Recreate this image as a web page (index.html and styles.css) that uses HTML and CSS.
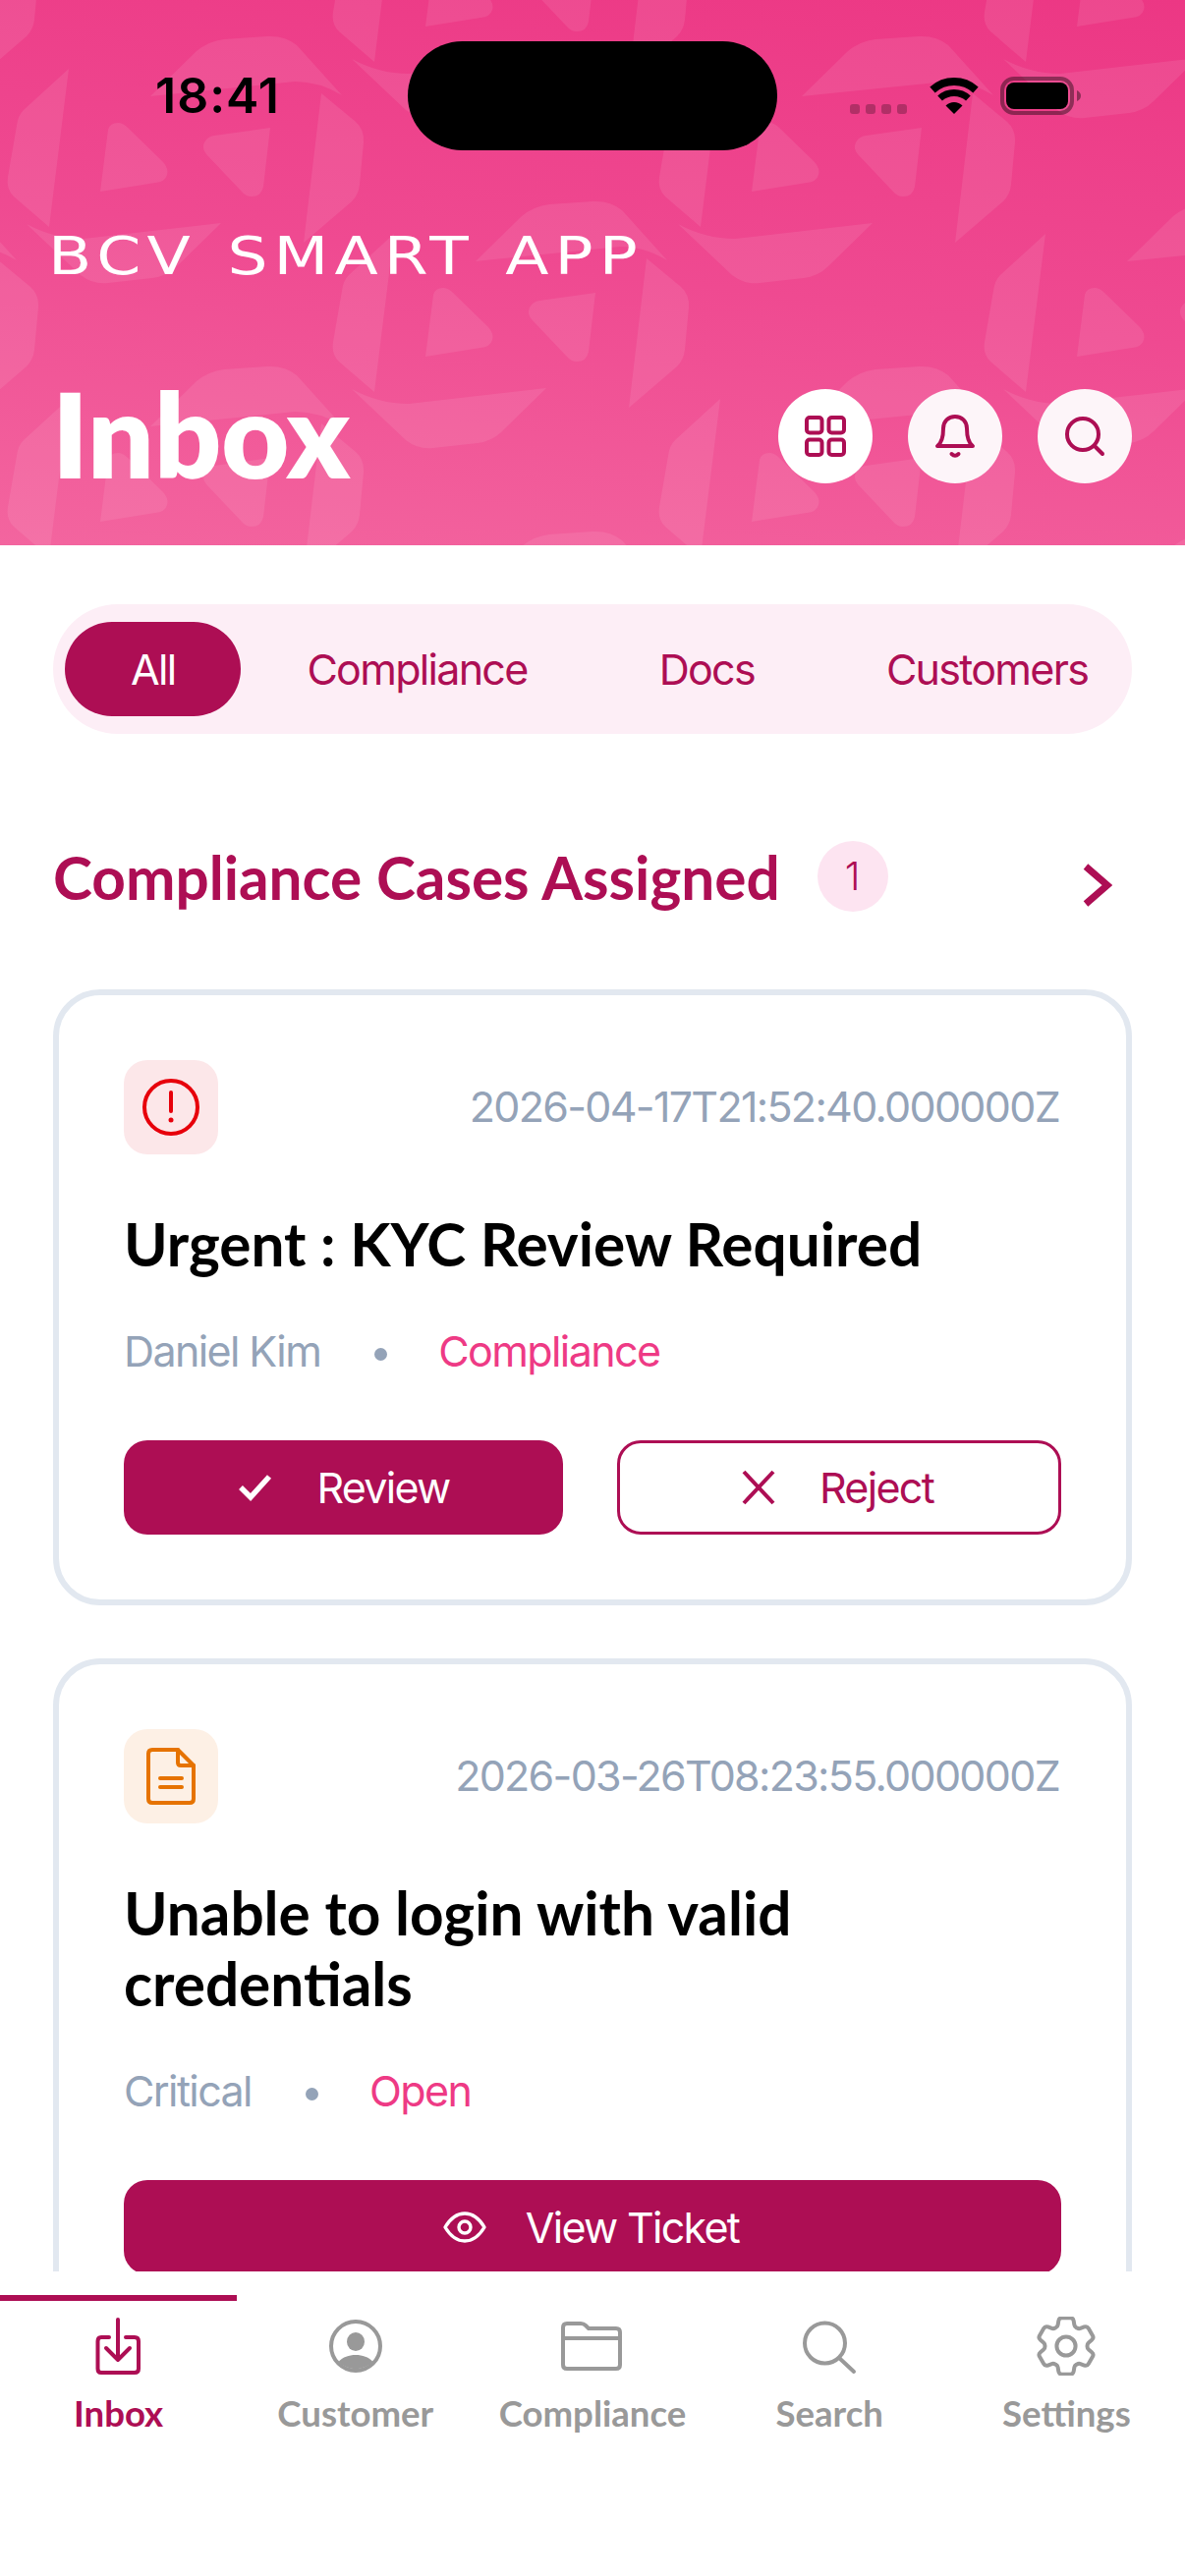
FILE: index.html
```html
<!DOCTYPE html>
<html lang="en">
<head>
<meta charset="utf-8">
<title>BCV Smart App - Inbox</title>
<link rel="stylesheet" href="styles.css">
</head>
<body>
<div class="app">
  <header class="hero">
    <svg class="hero-pattern" width="1206" height="555" viewBox="0 0 1206 555" aria-hidden="true">
      <defs>
        <g id="logo">
          <path d="M70 70 L24 112 Q18 118 17 128 L8 180 Q6 192 14 200 L50 231 Z"/>
          <path d="M153 98 L200 52 Q212 42 228 40 L272 37 Q290 36 302 46 L348 97 Q325 83 300 83 Z"/>
          <path d="M327 95 L362 124 Q371 132 370 145 L366 188 Q365 198 358 205 L309 247 Z"/>
          <path d="M225 227 L180 271 Q170 281 155 283 L110 288 Q95 290 82 280 L27 228 Q55 243 85 243 Z"/>
          <path d="M110 132 Q112 125 120 125 Q125 125 130 130 L166 165 Q172 172 170 178 Q168 185 158 186 L102 195 Z"/>
          <path d="M275 130 L268 190 Q266 200 256 200 Q250 200 246 195 L210 157 Q205 151 208 145 Q211 139 218 138 Z"/>
        </g>
      </defs>
      <g class="pattern-marks">
        <use href="#logo" x="-331" y="-168"/><use href="#logo" x="331" y="-168"/><use href="#logo" x="994" y="-168"/>
        <use href="#logo" x="0" y="0"/><use href="#logo" x="663" y="0"/>
        <use href="#logo" x="-331" y="168"/><use href="#logo" x="331" y="168"/><use href="#logo" x="994" y="168"/>
        <use href="#logo" x="0" y="336"/><use href="#logo" x="663" y="336"/>
        <use href="#logo" x="-331" y="504"/><use href="#logo" x="331" y="504"/><use href="#logo" x="994" y="504"/>
      </g>
    </svg>

    <div class="statusbar">
      <span class="clock">18:41</span>
      <span class="island"></span>
      <svg class="indicators" width="236" height="40" viewBox="0 0 236 40" aria-hidden="true">
        <g class="signal-dots">
          <rect x="0" y="28" width="10" height="10" rx="3"/>
          <rect x="16" y="28" width="10" height="10" rx="3"/>
          <rect x="32" y="28" width="10" height="10" rx="3"/>
          <rect x="48" y="28" width="10" height="10" rx="3"/>
        </g>
        <path class="wifi-arc" stroke-width="8" d="M84 13.5 A33 33 0 0 1 128 13.5"/>
        <path class="wifi-arc" stroke-width="7" d="M91.6 22 A21.5 21.5 0 0 1 120.4 22"/>
        <path d="M106 38 L97.5 29.5 A12 12 0 0 1 114.5 29.5 Z"/>
        <rect class="battery-case" x="155" y="2" width="71" height="35" rx="12"/>
        <rect x="159" y="6" width="63" height="27" rx="8"/>
        <path class="battery-cap" d="M231 14 V25 Q235 23 235 19.5 Q235 16 231 14 Z"/>
      </svg>
    </div>

    <div class="brand"><span class="brand-text">BCV SMART APP</span></div>

    <div class="hero-row">
      <h1 class="page-title">Inbox</h1>
      <div class="hero-actions">
        <button class="round-btn round-btn-solid" type="button" aria-label="Apps">
          <svg class="line-icon" width="48" height="48" viewBox="0 0 48 48">
            <rect x="5" y="5" width="15.5" height="15.5" rx="3"/>
            <rect x="27.5" y="5" width="15.5" height="15.5" rx="3"/>
            <rect x="5" y="27.5" width="15.5" height="15.5" rx="3"/>
            <rect x="27.5" y="27.5" width="15.5" height="15.5" rx="3"/>
          </svg>
        </button>
        <button class="round-btn" type="button" aria-label="Notifications">
          <svg class="line-icon" width="48" height="48" viewBox="0 0 48 48">
            <path d="M6 34 H42 C36.500 30 36 22 36 16 C36 9 31 4 24 4 C17 4 12 9 12 16 C12 22 11.500 30 6 34 Z"/>
            <path d="M20.500 42 Q24 45.500 27.500 42"/>
          </svg>
        </button>
        <button class="round-btn" type="button" aria-label="Search">
          <svg class="line-icon" width="48" height="48" viewBox="0 0 48 48">
            <circle cx="22" cy="22" r="16"/>
            <path d="M34 34 L42 42"/>
          </svg>
        </button>
      </div>
    </div>
  </header>

  <main class="content">
    <nav class="tabs">
      <span class="tab tab-active">All</span>
      <span class="tab">Compliance</span>
      <span class="tab">Docs</span>
      <span class="tab">Customers</span>
    </nav>

    <div class="section-head">
      <h2 class="section-title">Compliance Cases Assigned</h2>
      <span class="count-badge">1</span>
      <svg class="chevron" width="30" height="44" viewBox="0 0 30 44" aria-hidden="true">
        <path d="M3 3 L25 22 L3 41"/>
      </svg>
    </div>

    <article class="card">
      <div class="card-top">
        <span class="tile tile-red">
          <svg class="tile-icon" width="60" height="60" viewBox="0 0 60 60">
            <circle cx="30" cy="30" r="27"/>
            <path d="M30 15 V34"/>
            <circle class="tile-dot" cx="30" cy="43" r="2.500"/>
          </svg>
        </span>
        <time class="stamp">2026-04-17T21:52:40.000000Z</time>
      </div>
      <h3 class="card-title">Urgent : KYC Review Required</h3>
      <div class="meta">
        <span>Daniel Kim</span>
        <span class="meta-dot"></span>
        <span class="meta-accent">Compliance</span>
      </div>
      <div class="actions">
        <button class="btn btn-primary" type="button">
          <svg class="btn-icon" width="48" height="48" viewBox="0 0 48 48"><path class="check" d="M9 24 L19 34 L38 13"/></svg>
          Review
        </button>
        <button class="btn btn-outline" type="button">
          <svg class="btn-icon" width="48" height="48" viewBox="0 0 48 48"><path d="M9 8 L39 40 M39 8 L9 40"/></svg>
          Reject
        </button>
      </div>
    </article>

    <article class="card">
      <div class="card-top">
        <span class="tile tile-orange">
          <svg class="tile-icon" width="60" height="60" viewBox="0 0 60 60">
            <path d="M37 3 H11 Q7 3 7 7 V53 Q7 57 11 57 H49 Q53 57 53 53 V19 Z"/>
            <path d="M37 3 V16 Q37 19 40 19 H53"/>
            <path d="M19 32 H41 M19 41 H41"/>
          </svg>
        </span>
        <time class="stamp">2026-03-26T08:23:55.000000Z</time>
      </div>
      <h3 class="card-title">Unable to login with valid<br>credentials</h3>
      <div class="meta">
        <span>Critical</span>
        <span class="meta-dot"></span>
        <span class="meta-accent">Open</span>
      </div>
      <div class="actions actions-single">
        <button class="btn btn-primary" type="button">
          <svg class="btn-icon btn-icon-eye" width="48" height="48" viewBox="0 0 24 24">
            <path d="M2 12 C5 7 8 5 12 5 C16 5 19 7 22 12 C19 17 16 19 12 19 C8 19 5 17 2 12 Z"/>
            <circle cx="12" cy="12" r="3"/>
          </svg>
          View Ticket
        </button>
      </div>
    </article>
  </main>

  <nav class="tabbar">
    <a class="tabbar-item tabbar-item-active">
      <svg class="nav-icon" width="60" height="60" viewBox="1 0 60 60">
        <path d="M21 21 H13 Q9.500 21 9.500 25 V53 Q9.500 57 13 57 H47 Q51 57 51 53 V25 Q51 21 47 21 H38"/>
        <path d="M30 3 V44 M18 32 L30 44 L42 32"/>
      </svg>
      <span>Inbox</span>
    </a>
    <a class="tabbar-item">
      <svg class="nav-icon" width="60" height="60" viewBox="0 0 60 60">
        <circle cx="30" cy="30" r="25"/>
        <ellipse class="nav-fill" cx="30" cy="25.500" rx="9" ry="9.500"/>
        <path class="nav-fill" d="M12.500 46 C17 41 23 39 30 39 C37 39 43 41 47.500 46 A25 25 0 0 1 12.500 46 Z"/>
      </svg>
      <span>Customer</span>
    </a>
    <a class="tabbar-item">
      <svg class="nav-icon" width="64" height="60" viewBox="0 0 64 60">
        <path d="M2 11 Q2 7 6 7 H20 Q23 7 25 9 L28 12 H56 Q60 12 60 16 V49 Q60 53 56 53 H6 Q2 53 2 49 Z"/>
        <path d="M2 22 H60"/>
      </svg>
      <span>Compliance</span>
    </a>
    <a class="tabbar-item">
      <svg class="nav-icon" width="60" height="60" viewBox="0 0 60 60">
        <circle cx="25.500" cy="27" r="20.500"/>
        <path d="M40 42 L55 56"/>
      </svg>
      <span>Search</span>
    </a>
    <a class="tabbar-item">
      <svg class="nav-icon nav-icon-gear" width="60" height="60" viewBox="2.600 2.600 18.800 18.800">
        <path d="M9.594 3.940c.09-.542.56-.94 1.110-.94h2.593c.55 0 1.020.398 1.110.94l.213 1.281c.063.374.313.686.645.870.074.040.147.083.22.127.325.196.72.257 1.075.124l1.217-.456a1.125 1.125 0 0 1 1.370.49l1.296 2.247a1.125 1.125 0 0 1-.26 1.431l-1.003.827c-.293.241-.438.613-.43.992a7.723 7.723 0 0 1 0 .255c-.008.378.137.75.43.991l1.004.827c.424.35.534.955.26 1.43l-1.298 2.247a1.125 1.125 0 0 1-1.369.491l-1.217-.456c-.355-.133-.75-.072-1.076.124a6.470 6.470 0 0 1-.22.128c-.331.183-.581.495-.644.869l-.213 1.281c-.09.543-.56.94-1.110.94h-2.594c-.55 0-1.019-.398-1.110-.94l-.213-1.281c-.062-.374-.312-.686-.644-.87a6.520 6.520 0 0 1-.22-.127c-.325-.196-.72-.257-1.076-.124l-1.217.456a1.125 1.125 0 0 1-1.369-.49l-1.297-2.247a1.125 1.125 0 0 1 .26-1.431l1.004-.827c.292-.24.437-.613.43-.991a6.932 6.932 0 0 1 0-.255c.007-.38-.138-.751-.43-.992l-1.004-.827a1.125 1.125 0 0 1-.26-1.430l1.297-2.247a1.125 1.125 0 0 1 1.370-.491l1.216.456c.356.133.751.072 1.076-.124.072-.044.146-.086.22-.128.332-.183.582-.495.644-.869l.214-1.280Z"/>
        <circle cx="12" cy="12" r="3"/>
      </svg>
      <span>Settings</span>
    </a>
  </nav>
</div>
</body>
</html>
```

FILE: styles.css
```css
* {
  box-sizing: border-box;
}

html,
body {
  margin: 0;
  padding: 0;
  background: #ffffff;
}

.app {
  width: 1206px;
  height: 2622px;
  display: flex;
  flex-direction: column;
  overflow: hidden;
  font-family: "Inter", "Liberation Sans", sans-serif;
  background: #ffffff;
}

/* Header */
.hero {
  position: relative;
  flex: 0 0 555px;
  display: flex;
  flex-direction: column;
  overflow: hidden;
  background: linear-gradient(187deg, #ec3784 0%, #ef4a91 50%, #f3659f 100%);
}

.hero-pattern {
  position: absolute;
  inset: 0;
}

.pattern-marks {
  fill: #ffffff;
  fill-opacity: 0.085;
}

.statusbar,
.brand,
.hero-row {
  position: relative;
}

.statusbar {
  display: flex;
  align-items: flex-start;
  height: 153px;
  padding: 42px 0 0 158px;
}

.clock {
  width: 257px;
  margin-top: 20px;
  font-size: 50px;
  line-height: 70px;
  letter-spacing: 1px;
  font-weight: 600;
  color: #000000;
}

.island {
  width: 376px;
  height: 111px;
  border-radius: 56px;
  background: #000000;
}

.indicators {
  margin: 36px 0 0 74px;
  overflow: visible;
}

.signal-dots {
  fill-opacity: 0.25;
}

.wifi-arc {
  fill: none;
  stroke: #000000;
}

.battery-case {
  fill: none;
  stroke: #000000;
  stroke-opacity: 0.4;
  stroke-width: 4;
}

.battery-cap {
  fill-opacity: 0.4;
}

.brand {
  margin: 76px 0 0 49px;
  font-family: "DejaVu Sans", sans-serif;
  font-size: 53px;
  line-height: 64px;
  letter-spacing: 5px;
  word-spacing: 4px;
  color: #ffffff;
  white-space: nowrap;
}

.brand-text {
  display: inline-block;
  transform: scaleX(1.22);
  transform-origin: left center;
}

.hero-row {
  display: flex;
  align-items: center;
  justify-content: space-between;
  margin-top: 103px;
  padding: 0 54px;
}

.page-title {
  align-self: flex-start;
  margin: 0 0 0 -1px;
  font-family: "Lato", sans-serif;
  font-size: 119px;
  line-height: 90px;
  font-weight: 800;
  color: #ffffff;
}

.hero-actions {
  display: flex;
  gap: 36px;
}

.round-btn {
  width: 96px;
  height: 96px;
  padding: 0;
  display: flex;
  align-items: center;
  justify-content: center;
  border: 0;
  border-radius: 50%;
  background: #fdf5f9;
}

.round-btn-solid {
  background: #ffffff;
}

.line-icon {
  fill: none;
  stroke: #ad0e54;
  stroke-width: 4;
  stroke-linecap: round;
  stroke-linejoin: round;
}

/* Content */
.content {
  flex: 0 0 1757px;
  padding: 60px 54px 0;
  overflow: hidden;
}

.tabs {
  display: flex;
  align-items: center;
  height: 132px;
  padding: 0 0 0 12px;
  overflow: hidden;
  border-radius: 66px;
  background: #fdeef6;
}

.tab {
  flex: none;
  height: 96px;
  padding: 0 67px;
  border-radius: 48px;
  font-size: 43px;
  line-height: 96px;
  letter-spacing: -1.7px;
  font-weight: 400;
  color: #ad0e54;
}

.tab-active {
  background: #ad0e54;
  color: #ffffff;
}

.section-head {
  display: flex;
  align-items: center;
  height: 72px;
  margin-top: 109px;
  padding-right: 20px;
}

.section-title {
  margin: 2px 0 0;
  font-family: "Lato", sans-serif;
  font-size: 60.3px;
  line-height: 72px;
  font-weight: 700;
  color: #ad0e54;
}

.count-badge {
  width: 72px;
  height: 72px;
  margin-left: 38px;
  border-radius: 50%;
  background: #fde4f1;
  font-size: 40px;
  line-height: 72px;
  font-weight: 300;
  text-align: center;
  color: #ad0e54;
}

.chevron {
  margin: 18px 0 0 auto;
  fill: none;
  stroke: #ad0e54;
  stroke-width: 7;
}

.card {
  margin-top: 54px;
  padding: 66px;
  border: 6px solid #e2e8f0;
  border-radius: 48px;
  background: #ffffff;
}

.section-head + .card {
  margin-top: 79px;
}

.card-top {
  display: flex;
  align-items: center;
  justify-content: space-between;
}

.tile {
  width: 96px;
  height: 96px;
  display: flex;
  align-items: center;
  justify-content: center;
  border-radius: 24px;
}

.tile-red {
  background: #fce7e9;
  color: #e7000b;
}

.tile-orange {
  background: #fdf0e5;
  color: #e67300;
}

.tile-icon {
  fill: none;
  stroke: currentColor;
  stroke-width: 4;
  stroke-linecap: round;
  stroke-linejoin: round;
}

.tile-dot {
  fill: currentColor;
  stroke: none;
}

.stamp {
  margin: 0 2px 2px 0;
  font-size: 43px;
  line-height: 48px;
  letter-spacing: -1.7px;
  color: #94a3b8;
}

.card-title {
  margin: 55px 0 0;
  font-family: "Lato", sans-serif;
  font-size: 60.3px;
  line-height: 72px;
  font-weight: 700;
  color: #000000;
}

.meta {
  display: flex;
  align-items: center;
  gap: 55px;
  margin-top: 49px;
  font-size: 43px;
  line-height: 48px;
  letter-spacing: -1.6px;
  color: #94a3b8;
}

.meta-dot {
  width: 13px;
  height: 13px;
  margin: 6px -3px 0 0;
  border-radius: 50%;
  background: #94a3b8;
}

.meta-accent {
  color: #ee3a85;
}

.actions {
  display: grid;
  grid-template-columns: 447fr 452fr;
  gap: 55px;
  margin-top: 67px;
}

.actions-single {
  grid-template-columns: 1fr;
}

.btn {
  height: 96px;
  padding: 0 5px 0 0;
  display: flex;
  align-items: center;
  justify-content: center;
  gap: 38px;
  border-radius: 24px;
  font-family: "Inter", "Liberation Sans", sans-serif;
  font-size: 43px;
  letter-spacing: -1.7px;
  font-weight: 400;
}

.btn-primary {
  border: 0;
  background: #ad0e54;
  color: #ffffff;
}

.btn-outline {
  padding-right: 10px;
  border: 3px solid #ad0e54;
  background: #ffffff;
  color: #ad0e54;
}

.btn-icon {
  fill: none;
  stroke: currentColor;
  stroke-width: 4;
}

.btn-icon-eye {
  stroke-width: 1.700;
  stroke-linejoin: round;
}

.check {
  stroke-width: 5.500;
}

/* Bottom bar */
.tabbar {
  flex: 1;
  display: grid;
  grid-template-columns: repeat(5, 1fr);
  padding-top: 24px;
  background: #ffffff;
}

.tabbar-item {
  height: 160px;
  display: flex;
  flex-direction: column;
  align-items: center;
  border-top: 6px solid transparent;
  padding-top: 16px;
  font-family: "Lato", sans-serif;
  font-size: 36.6px;
  line-height: 44px;
  font-weight: 700;
  color: #999999;
}

.tabbar-item span {
  margin-top: 16px;
}

.tabbar-item-active {
  border-top-color: #ad0e54;
  color: #ad0e54;
}

.nav-icon {
  flex: none;
  fill: none;
  stroke: currentColor;
  stroke-width: 4;
  stroke-linecap: round;
  stroke-linejoin: round;
}

.nav-icon-gear {
  stroke-width: 1.250;
}

.nav-fill {
  fill: currentColor;
  stroke: none;
}
```
